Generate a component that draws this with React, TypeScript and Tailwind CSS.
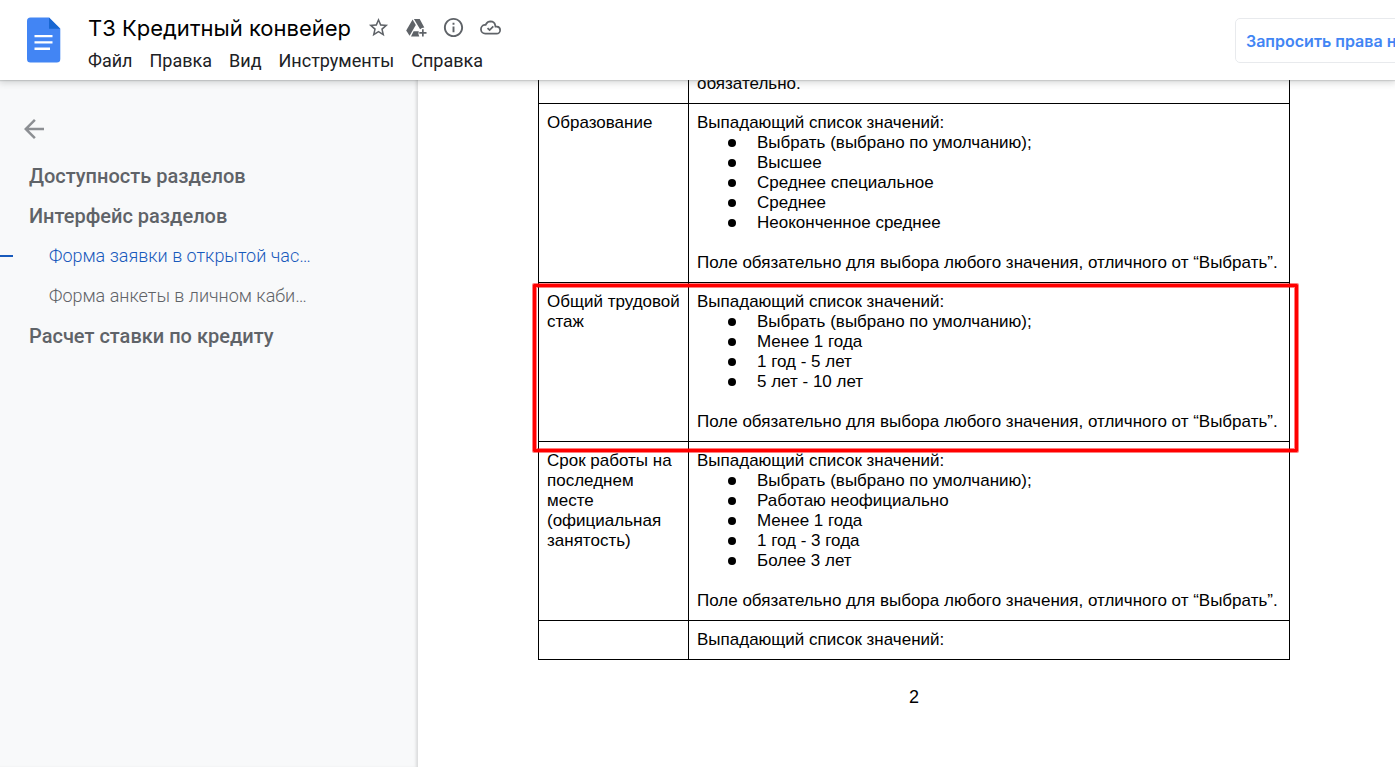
import { MdArrowBack, MdStarBorder, MdOutlineInfo } from "react-icons/md";

const menu = ["Файл", "Правка", "Вид", "Инструменты", "Справка"];

type Row = { title: string; intro: string; items?: string[]; note?: string };

const note = "Поле обязательно для выбора любого значения, отличного от “Выбрать”.";
const intro = "Выпадающий список значений:";
const byDefault = "Выбрать (выбрано по умолчанию);";

const rows: Row[] = [
  { title: "", intro: "обязательно." },
  {
    title: "Образование",
    intro,
    items: [byDefault, "Высшее", "Среднее специальное", "Среднее", "Неоконченное среднее"],
    note,
  },
  {
    title: "Общий трудовой стаж",
    intro,
    items: [byDefault, "Менее 1 года", "1 год - 5 лет", "5 лет - 10 лет"],
    note,
  },
  {
    title: "Срок работы на последнем месте (официальная занятость)",
    intro,
    items: [byDefault, "Работаю неофициально", "Менее 1 года", "1 год - 3 года", "Более 3 лет"],
    note,
  },
  { title: "", intro },
];

function DocsLogo() {
  return (
    <svg viewBox="0 0 34 46" className="h-[46px] w-[34px]" aria-hidden="true">
      <path
        d="M3.5.5H22L33.300 11.800V42a3.500 3.500 0 0 1-3.500 3.500H3.500A3.500 3.500 0 0 1 0 42V4A3.500 3.500 0 0 1 3.500.5Z"
        fill="#4285f4"
      />
      <path d="M22 .5 33.300 11.800H22Z" fill="#1967d2" />
      <path d="M7.500 18h18v2.300h-18zM7.500 24.300h18v2.300h-18zM7.500 30.600h15.500v2.300H7.500z" fill="#fff" />
    </svg>
  );
}

function DriveAdd() {
  return (
    <svg viewBox="0 0 22 20" className="h-5 w-[22px]" fill="#5f6368" aria-hidden="true">
      <path d="M7.600 1.600 10.800 6.900 4.600 17.800 1.200 12.600Z" />
      <path d="M8.900 1h5.800l4.600 8.400a6 6 0 0 0-4.200 1.800Z" />
      <path d="M8.600 13.200h5.200a6 6 0 0 0 .5 5.300H6Z" />
      <path d="M17 11.300h1.700V14h2.800v1.700h-2.800v2.800H17v-2.800h-2.700V14H17z" />
    </svg>
  );
}

function CloudCheck() {
  return (
    <svg viewBox="0 0 24 24" className="size-[21px]" fill="none" stroke="#5f6368" strokeWidth="2" aria-hidden="true">
      <path d="M19 19H6a5 5 0 0 1-.6-9.950l1.060-.11.500-.95A5.970 5.970 0 0 1 12 5c2.620 0 4.880 1.860 5.390 4.430l.3 1.500 1.530.11A3.980 3.980 0 0 1 23 15a4 4 0 0 1-4 4Z" />
      <path d="m8.600 12.600 2.400 2.400 4.200-4.200" />
    </svg>
  );
}

function Header() {
  return (
    <header className="sticky top-0 z-10 flex h-20 items-start bg-white shadow-[0_1px_1px_rgba(60,64,67,0.15),0_2px_7px_1px_rgba(60,64,67,0.2)]">
      <a href="#" aria-label="Документы" className="ml-[27px] mt-[17px] block shrink-0">
        <DocsLogo />
      </a>
      <div className="ml-[27px] flex flex-col">
        <div className="flex h-12 items-center pt-[7px]">
          <h1 className="whitespace-nowrap font-['Inter',sans-serif] text-[22px] leading-8 text-black">
            ТЗ Кредитный конвейер
          </h1>
          <div className="ml-4 flex items-center gap-[15px] text-[#5f6368]">
            <button aria-label="Пометить"><MdStarBorder className="size-[23px]" /></button>
            <button aria-label="Добавить на Диск"><DriveAdd /></button>
            <button aria-label="Сведения"><MdOutlineInfo className="size-[23px]" /></button>
            <button aria-label="Статус документа"><CloudCheck /></button>
          </div>
        </div>
        <nav className="mt-px flex gap-[17px] font-['Roboto',sans-serif] text-lg leading-6 text-[#202124]">
          {menu.map((m) => (
            <button key={m}>{m}</button>
          ))}
        </nav>
      </div>
      <div className="ml-auto w-40 shrink-0 overflow-hidden pt-[18px]">
        <button className="h-[45px] whitespace-nowrap rounded-[5px] border border-[#e8eaed] px-[10px] font-['Inter',sans-serif] text-base font-semibold text-[#4285f4]">
          Запросить права на
        </button>
      </div>
    </header>
  );
}

function Outline() {
  return (
    <aside className="w-[418px] shrink-0 bg-[#f8f9fa] pt-[34px] font-['Roboto',sans-serif] text-[#5f6368] shadow-[inset_-3px_0_3px_-1px_rgba(0,0,0,0.12)]">
      <button aria-label="Закрыть структуру" className="ml-[19px] block text-[#8c8f93]">
        <MdArrowBack className="size-[30px]" />
      </button>
      <nav className="mt-3 flex flex-col">
        <a href="#access" className="pl-[29px] text-xl/10 font-medium">Доступность разделов</a>
        <a href="#ui" className="pl-[29px] text-xl/10 font-medium">Интерфейс разделов</a>
        <a href="#form" className="flex items-center text-lg/10 font-light text-[#185abc]">
          <span className="mr-9 h-[2px] w-[13px] bg-[#185abc]" />
          Форма заявки в открытой час…
        </a>
        <a href="#profile" className="pl-[49px] text-lg/10 font-light">Форма анкеты в личном каби…</a>
        <a href="#rate" className="pl-[29px] text-xl/10 font-medium">Расчет ставки по кредиту</a>
      </nav>
    </aside>
  );
}

export default function App() {
  return (
    <div className="flex h-screen flex-col overflow-hidden bg-white">
      <Header />
      <div className="flex min-h-0 flex-1">
        <Outline />
        <main className="-mt-4 min-w-0 flex-1 pl-[120px] pr-[105px] font-['Liberation_Sans',Arial,sans-serif] text-black">
          <div className="relative">
            <table className="w-full table-fixed border-collapse text-[17px] leading-5">
              <colgroup>
                <col className="w-[150px]" />
                <col />
              </colgroup>
              <tbody>
                {rows.map((r, i) => (
                  <tr key={i} className="align-top">
                    <td className="border border-black px-2 py-[9px]">{r.title}</td>
                    <td className="border border-black px-2 py-[9px]">
                      <p>{r.intro}</p>
                      {r.items && (
                        <ul className="mb-5">
                          {r.items.map((t) => (
                            <li key={t} className="flex items-center pl-[31px]">
                              <span className="mr-[21px] size-2 rounded-full bg-black" />
                              {t}
                            </li>
                          ))}
                        </ul>
                      )}
                      {r.note && <p>{r.note}</p>}
                    </td>
                  </tr>
                ))}
              </tbody>
            </table>
            <div className="pointer-events-none absolute -left-[5px] -right-[8px] top-[220px] h-[168px] rounded-[1px] border-3 border-[#ff0000] shadow-[0_0_0_1px_rgba(255,0,0,0.5),inset_0_0_0_1px_rgba(255,0,0,0.5)]" />
          </div>
          <p className="mt-[25px] text-center text-lg leading-6">2</p>
        </main>
      </div>
    </div>
  );
}
